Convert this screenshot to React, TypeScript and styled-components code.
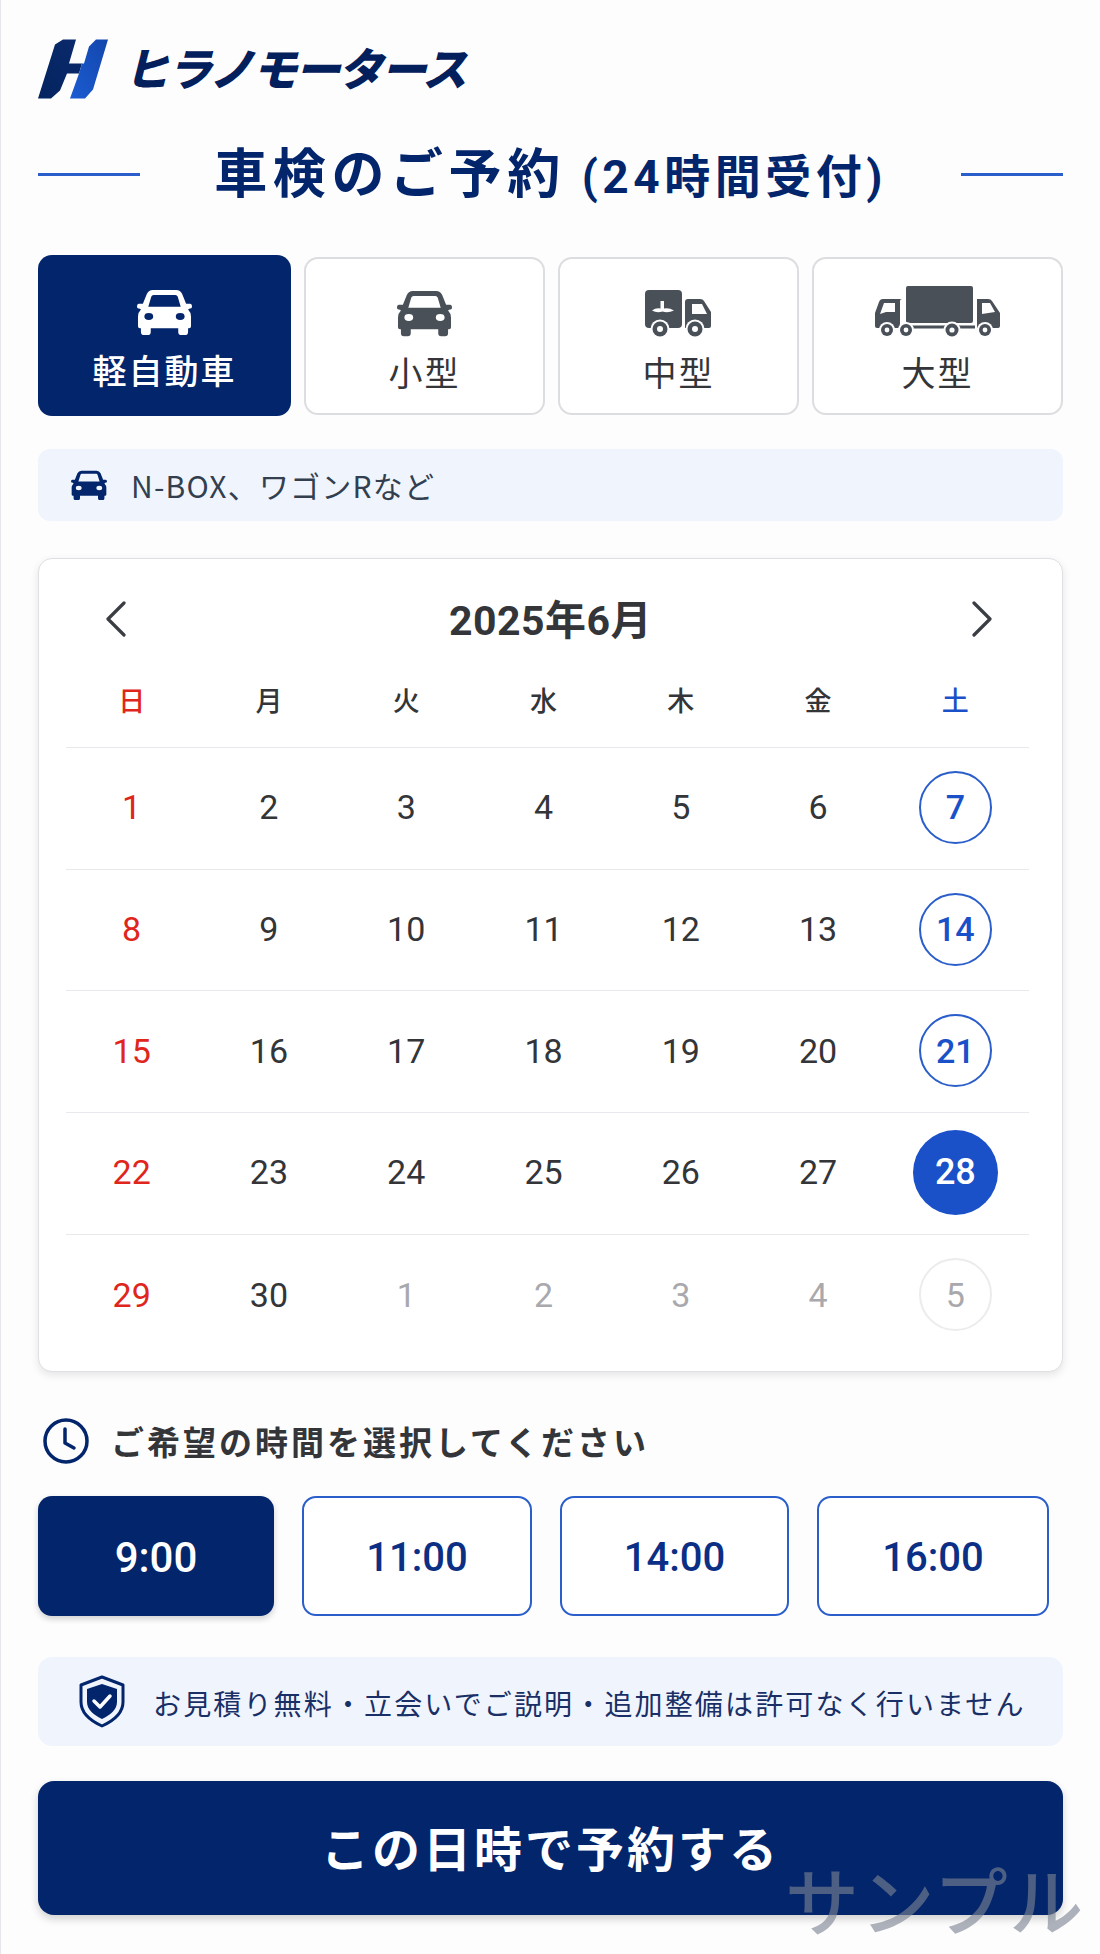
import React from 'react'
import styled, { createGlobalStyle } from 'styled-components'

const NAVY = '#02256c'
const BLUE = '#1a50c8'
const INK = '#333539'
const ICON_GRAY = '#4a5058'

const GlobalStyle = createGlobalStyle`
  html, body { margin: 0; padding: 0; background: #fdfdfe; }
  * { box-sizing: border-box; }
  body { font-family: Roboto, "Noto Sans CJK JP", sans-serif; }
`

const CarIcon = ({ width }: { width: number }) => (
  <svg width={width} viewBox='0 0 56 47' fill='currentColor'>
    <path
      fillRule='evenodd'
      d='M16 1H40Q44 1 46 5L50 15H54Q56 15 56 18Q56 20 53 20L52 21Q55 24 55 28V38Q55 40 53 40H52V44Q52 47 49 47H45Q42 47 42 44V40H14V44Q14 47 11 47H7Q4 47 4 44V40H3Q1 40 1 38V28Q1 24 4 21L3 20Q0 20 0 18Q0 15 2 15H6L10 5Q12 1 16 1ZM17 6Q15 6 14.500 8L11.500 18H44.500L41.500 8Q41 6 39 6ZM12 24.500A4.500 3.500 0 1 0 12 31.500A4.500 3.500 0 1 0 12 24.500ZM44 24.500A4.500 3.500 0 1 0 44 31.500A4.500 3.500 0 1 0 44 24.500Z'
    />
  </svg>
)

const Wheel = ({ x, y, r }: { x: number; y: number; r: number }) => (
  <g>
    <circle cx={x} cy={y} r={r + 2} fill='#fdfdfe' />
    <circle cx={x} cy={y} r={r} fill={ICON_GRAY} />
    <circle cx={x} cy={y} r={r * 0.4} fill='#fdfdfe' />
  </g>
)

const MediumTruckIcon = () => (
  <svg width={67} viewBox='0 0 67 47'>
    <rect x='0' y='0' width='37' height='38' rx='4' fill={ICON_GRAY} />
    <path
      d='M40 12Q40 9 43 9H55Q58 9 59 11L66 22V36Q66 38 64 38H40Z'
      fill={ICON_GRAY}
    />
    <path d='M47 14H57L62 24H47Z' fill='#fdfdfe' />
    <path
      d='M15.500 11H19V18.500Q24 17.500 29 20.500Q23 23.500 17.500 21.500Q12 23.500 7 20.500Q11 17.500 15.500 18.500Z'
      fill='#fdfdfe'
    />
    <Wheel x={15} y={39} r={7.500} />
    <Wheel x={50} y={39} r={7.500} />
  </svg>
)

const LargeTruckIcon = () => (
  <svg width={125} viewBox='0 0 125 51'>
    <rect x='31' y='0' width='67' height='37' rx='2' fill={ICON_GRAY} />
    <path
      d='M27 13H8Q5 13 4 16L0 27V40Q0 42 2 42H24Q25 42 25 40V15Q25 13 27 13Z'
      fill={ICON_GRAY}
    />
    <path d='M9 17H20V26H11L5 28Z' fill='#fdfdfe' />
    <path
      d='M102 13H113Q116 13 117 15L125 27V40Q125 42 123 42H102Z'
      fill={ICON_GRAY}
    />
    <path d='M107 17H115L120 26L107 28Z' fill='#fdfdfe' />
    <rect x='37' y='39.500' width='63' height='3' fill={ICON_GRAY} />
    <Wheel x={12} y={44} r={6} />
    <Wheel x={31} y={44} r={6} />
    <Wheel x={77} y={44} r={6.500} />
    <Wheel x={110} y={44} r={6} />
  </svg>
)

const HLogo = () => (
  <svg width={70} height={63} viewBox='0 0 70 60'>
    <defs>
      <linearGradient id='hDark' x1='0' y1='1' x2='1' y2='0'>
        <stop offset='0' stopColor='#04235f' />
        <stop offset='1' stopColor='#0a2a6c' />
      </linearGradient>
      <linearGradient id='hBlue' x1='0' y1='1' x2='1' y2='0'>
        <stop offset='0' stopColor='#1b5cd2' />
        <stop offset='1' stopColor='#1346ac' />
      </linearGradient>
    </defs>
    <path
      d='M17 5L25 0H38L31 24H44L41 34H29L22 51L13 59H0Z'
      fill='url(#hDark)'
    />
    <path d='M51 7L58 0H70L55 50L47 59H32L41 34L44 24H46Z' fill='url(#hBlue)' />
  </svg>
)

const ShieldIcon = () => (
  <svg width={46} height={53} viewBox='0 0 46 53' fill='none'>
    <path
      d='M23 2L44 10V27C44 38 34 46 23 51C12 46 2 38 2 27V10Z'
      stroke={NAVY}
      strokeWidth='3'
      strokeLinejoin='round'
    />
    <path d='M23 9L38 14V27C38 35 31 40 23 44C15 40 8 35 8 27V14Z' fill={NAVY} />
    <path
      d='M15 26L21 32L31 21'
      stroke='#fff'
      strokeWidth='3.500'
      strokeLinecap='round'
      strokeLinejoin='round'
    />
  </svg>
)

const ClockIcon = () => (
  <svg width={46} height={46} viewBox='0 0 46 46' fill='none'>
    <circle cx='23' cy='23' r='21' stroke={NAVY} strokeWidth='3.500' />
    <path
      d='M22 11V25L31 30'
      stroke={NAVY}
      strokeWidth='3.500'
      strokeLinecap='round'
      strokeLinejoin='round'
    />
  </svg>
)

const Chevron = ({ right }: { right?: boolean }) => (
  <svg width={22} height={36} viewBox='0 0 22 36' fill='none'>
    <path
      d={right ? 'M3 2L19 18L3 34' : 'M19 2L3 18L19 34'}
      stroke='#3a3d42'
      strokeWidth='3.200'
      strokeLinecap='round'
      strokeLinejoin='round'
    />
  </svg>
)

type Tone = 'plain' | 'sun' | 'sat' | 'picked' | 'muted' | 'mutedSat'

const weekDays = ['日', '月', '火', '水', '木', '金', '土']

const toneOf = (index: number, value: number, week: number): Tone => {
  if (week === 4 && index > 1) return index === 6 ? 'mutedSat' : 'muted'
  if (value === 28) return 'picked'
  if (index === 0) return 'sun'
  if (index === 6) return 'sat'
  return 'plain'
}

const weeks = [
  [1, 2, 3, 4, 5, 6, 7],
  [8, 9, 10, 11, 12, 13, 14],
  [15, 16, 17, 18, 19, 20, 21],
  [22, 23, 24, 25, 26, 27, 28],
  [29, 30, 1, 2, 3, 4, 5],
]

const times = ['9:00', '11:00', '14:00', '16:00']

const App = () => (
  <Page>
    <GlobalStyle />
    <LogoRow>
      <HLogo />
      <LogoText>ヒラノモータース</LogoText>
    </LogoRow>

    <TitleRow>
      <TitleLine />
      <Title>
        車検のご予約<TitleSub> (24時間受付)</TitleSub>
      </Title>
      <TitleLine />
    </TitleRow>

    <Tabs>
      <Tab $active>
        <TabIcon>
          <CarIcon width={55} />
        </TabIcon>
        <TabLabel>軽自動車</TabLabel>
      </Tab>
      <Tab>
        <TabIcon>
          <CarIcon width={55} />
        </TabIcon>
        <TabLabel>小型</TabLabel>
      </Tab>
      <Tab>
        <TabIcon>
          <MediumTruckIcon />
        </TabIcon>
        <TabLabel>中型</TabLabel>
      </Tab>
      <Tab>
        <TabIcon>
          <LargeTruckIcon />
        </TabIcon>
        <TabLabel>大型</TabLabel>
      </Tab>
    </Tabs>

    <InfoBar>
      <InfoIcon>
        <CarIcon width={36} />
      </InfoIcon>
      N-BOX、ワゴンRなど
    </InfoBar>

    <Calendar>
      <MonthRow>
        <Chevron />
        <MonthLabel>2025年6月</MonthLabel>
        <Chevron right />
      </MonthRow>
      <WeekHead>
        <DayGrid>
          {weekDays.map((day, i) => (
            <WeekDay key={day} $tone={i === 0 ? 'sun' : i === 6 ? 'sat' : 'plain'}>
              {day}
            </WeekDay>
          ))}
        </DayGrid>
      </WeekHead>
      {weeks.map((week, w) => (
        <WeekRow key={w}>
          <DayGrid>
            {week.map((value, i) => (
              <DayCell key={i}>
                <DayMark $tone={toneOf(i, value, w)}>{value}</DayMark>
              </DayCell>
            ))}
          </DayGrid>
        </WeekRow>
      ))}
    </Calendar>

    <TimeHeading>
      <ClockIcon />
      ご希望の時間を選択してください
    </TimeHeading>

    <TimeRow>
      {times.map((time, i) => (
        <TimeButton key={time} $active={i === 0}>
          {time}
        </TimeButton>
      ))}
    </TimeRow>

    <Notice>
      <ShieldIcon />
      <span>お見積り無料・立会いでご説明・追加整備は許可なく行いません</span>
    </Notice>

    <Cta>この日時で予約する</Cta>

    <Watermark>サンプル</Watermark>
  </Page>
)

export default App

const Page = styled.div`
  position: relative;
  width: 1100px;
  height: 1954px;
  padding: 36px 37px 0;
  overflow: hidden;
  border-left: 1px solid #e6e7ea;
  background: #fdfdfe;
`

const LogoRow = styled.div`
  height: 67px;
  display: flex;
  align-items: flex-start;
  gap: 21px;
  padding-top: 2px;
`

const LogoText = styled.span`
  display: inline-block;
  margin-top: 5px;
  color: #04205c;
  font-family: 'Noto Sans CJK JP', sans-serif;
  font-size: 45px;
  font-weight: 900;
  line-height: 48px;
  letter-spacing: -2px;
  white-space: nowrap;
  transform: skewX(-14deg);
`

const TitleRow = styled.div`
  margin-top: 43px;
  height: 60px;
  display: flex;
  align-items: center;
  justify-content: space-between;
`

const TitleLine = styled.div`
  width: 102px;
  height: 3px;
  margin-top: -4px;
  background: #2a5ecb;
`

const Title = styled.h1`
  margin: 0;
  color: ${NAVY};
  font-size: 53px;
  font-weight: 700;
  line-height: 60px;
  letter-spacing: 5.6px;
  white-space: nowrap;
`

const TitleSub = styled.span`
  font-size: 46px;
  letter-spacing: 4.5px;
`

const Tabs = styled.div`
  margin-top: 49px;
  height: 161px;
  display: grid;
  grid-template-columns: 253px 241px 241px 251px;
  gap: 13px;
  align-items: center;
`

const Tab = styled.div<{ $active?: boolean }>`
  height: ${(p) => (p.$active ? '161px' : '158px')};
  padding-top: ${(p) => (p.$active ? '29px' : '27px')};
  display: flex;
  flex-direction: column;
  align-items: center;
  gap: 15px;
  border-radius: 14px;
  border: ${(p) => (p.$active ? 'none' : '2px solid #dcdde0')};
  background: ${(p) => (p.$active ? NAVY : '#fff')};
  color: ${(p) => (p.$active ? '#fff' : INK)};
  font-weight: ${(p) => (p.$active ? 500 : 400)};
`

const TabIcon = styled.div`
  height: 51px;
  display: flex;
  align-items: flex-end;
  color: inherit;

  svg {
    display: block;
  }
  ${Tab}:not(:first-child) & {
    color: ${ICON_GRAY};
  }
`

const TabLabel = styled.div`
  font-size: 34px;
  line-height: 44px;
  letter-spacing: 2px;
`

const InfoBar = styled.div`
  margin-top: 33px;
  height: 72px;
  padding-left: 33px;
  display: flex;
  align-items: center;
  gap: 24px;
  border-radius: 12px;
  background: #f0f5fd;
  color: #333f4f;
  font-family: 'Noto Sans CJK JP', sans-serif;
  font-size: 30px;
  letter-spacing: 1.2px;
`

const InfoIcon = styled.div`
  display: flex;
  color: ${NAVY};
`

const Calendar = styled.div`
  margin-top: 37px;
  height: 814px;
  padding: 30px 33px 0 27px;
  border: 1px solid #dfe0e4;
  border-radius: 14px;
  background: #fff;
  box-shadow: 0 3px 8px rgba(0, 0, 0, 0.1);
`

const MonthRow = styled.div`
  height: 60px;
  padding: 0 36px 0 39px;
  display: flex;
  align-items: center;
  justify-content: space-between;
`

const MonthLabel = styled.div`
  margin: 3px 0 0 3px;
  color: ${INK};
  font-size: 41px;
  font-weight: 700;
  line-height: 60px;
  letter-spacing: 0.5px;
`

const DayGrid = styled.div`
  margin: 0 5px 0 -3px;
  display: grid;
  grid-template-columns: repeat(7, 1fr);
  height: 100%;
`

const WeekHead = styled.div`
  height: 99px;
  padding-top: 38px;
  padding-bottom: 30px;
  border-bottom: 1px solid #e8e9ec;
`

const toneColor = (tone: Tone) => {
  if (tone === 'sun') return '#e0261c'
  if (tone === 'sat') return BLUE
  if (tone === 'picked') return '#fff'
  if (tone === 'muted' || tone === 'mutedSat') return '#a9a9ad'
  return INK
}

const WeekDay = styled.div<{ $tone: Tone }>`
  color: ${(p) => toneColor(p.$tone)};
  text-align: center;
  font-size: 27px;
  font-weight: 500;
  line-height: 30px;
`

const WeekRow = styled.div`
  height: 121.7px;
  border-bottom: 1px solid #e8e9ec;

  &:last-child {
    border-bottom: none;
  }
`

const DayCell = styled.div`
  display: flex;
  align-items: center;
  justify-content: center;
  padding-bottom: 2px;
`

const DayMark = styled.div<{ $tone: Tone }>`
  flex: none;
  width: ${(p) => (p.$tone === 'picked' ? '85px' : '73px')};
  height: ${(p) => (p.$tone === 'picked' ? '85px' : '73px')};
  display: flex;
  align-items: center;
  justify-content: center;
  border-radius: 50%;
  border: ${(p) =>
    p.$tone === 'sat'
      ? `2px solid #2a5ecb`
      : p.$tone === 'mutedSat'
        ? `2px solid #ececee`
        : 'none'};
  background: ${(p) => (p.$tone === 'picked' ? '#1a50c8' : 'transparent')};
  color: ${(p) => toneColor(p.$tone)};
  font-size: ${(p) => (p.$tone === 'picked' ? '36px' : '34px')};
  font-weight: ${(p) => (p.$tone === 'sat' || p.$tone === 'picked' ? 500 : 400)};
`

const TimeHeading = styled.div`
  margin-top: 46px;
  height: 46px;
  padding-left: 5px;
  display: flex;
  align-items: center;
  gap: 22px;
  color: ${INK};
  font-size: 33px;
  font-weight: 700;
  letter-spacing: 3px;
  white-space: nowrap;
`

const TimeRow = styled.div`
  margin-top: 32px;
  display: grid;
  grid-template-columns: 236px 230px 229px 232px;
  gap: 28px;
`

const TimeButton = styled.div<{ $active?: boolean }>`
  height: 120px;
  padding-top: 3px;
  display: flex;
  align-items: center;
  justify-content: center;
  border-radius: 14px;
  border: ${(p) => (p.$active ? 'none' : '2px solid #2a5ecb')};
  background: ${(p) => (p.$active ? NAVY : '#fff')};
  box-shadow: ${(p) => (p.$active ? '0 3px 6px rgba(0, 0, 0, 0.18)' : 'none')};
  color: ${(p) => (p.$active ? '#fff' : '#0c2f86')};
  font-size: ${(p) => (p.$active ? '42px' : '40px')};
  font-weight: 500;
`

const Notice = styled.div`
  margin-top: 41px;
  height: 89px;
  padding-left: 41px;
  display: flex;
  align-items: center;
  gap: 28px;
  border-radius: 14px;
  background: #f0f5fd;
  color: #1a2f66;
  font-size: 28px;
  letter-spacing: 2.15px;
  white-space: nowrap;

  span {
    padding-top: 3px;
  }
`

const Cta = styled.div`
  margin-top: 35px;
  height: 134px;
  padding-bottom: 4px;
  display: flex;
  align-items: center;
  justify-content: center;
  border-radius: 16px;
  background: ${NAVY};
  box-shadow: 0 4px 8px rgba(0, 0, 0, 0.18);
  color: #fff;
  font-size: 48px;
  font-weight: 700;
  letter-spacing: 3px;
`

const Watermark = styled.div`
  position: absolute;
  left: 784px;
  top: 1861px;
  color: rgba(125, 130, 145, 0.62);
  font-size: 74px;
  font-weight: 500;
  line-height: 88px;
  letter-spacing: 1.5px;
  white-space: nowrap;
  pointer-events: none;
`
